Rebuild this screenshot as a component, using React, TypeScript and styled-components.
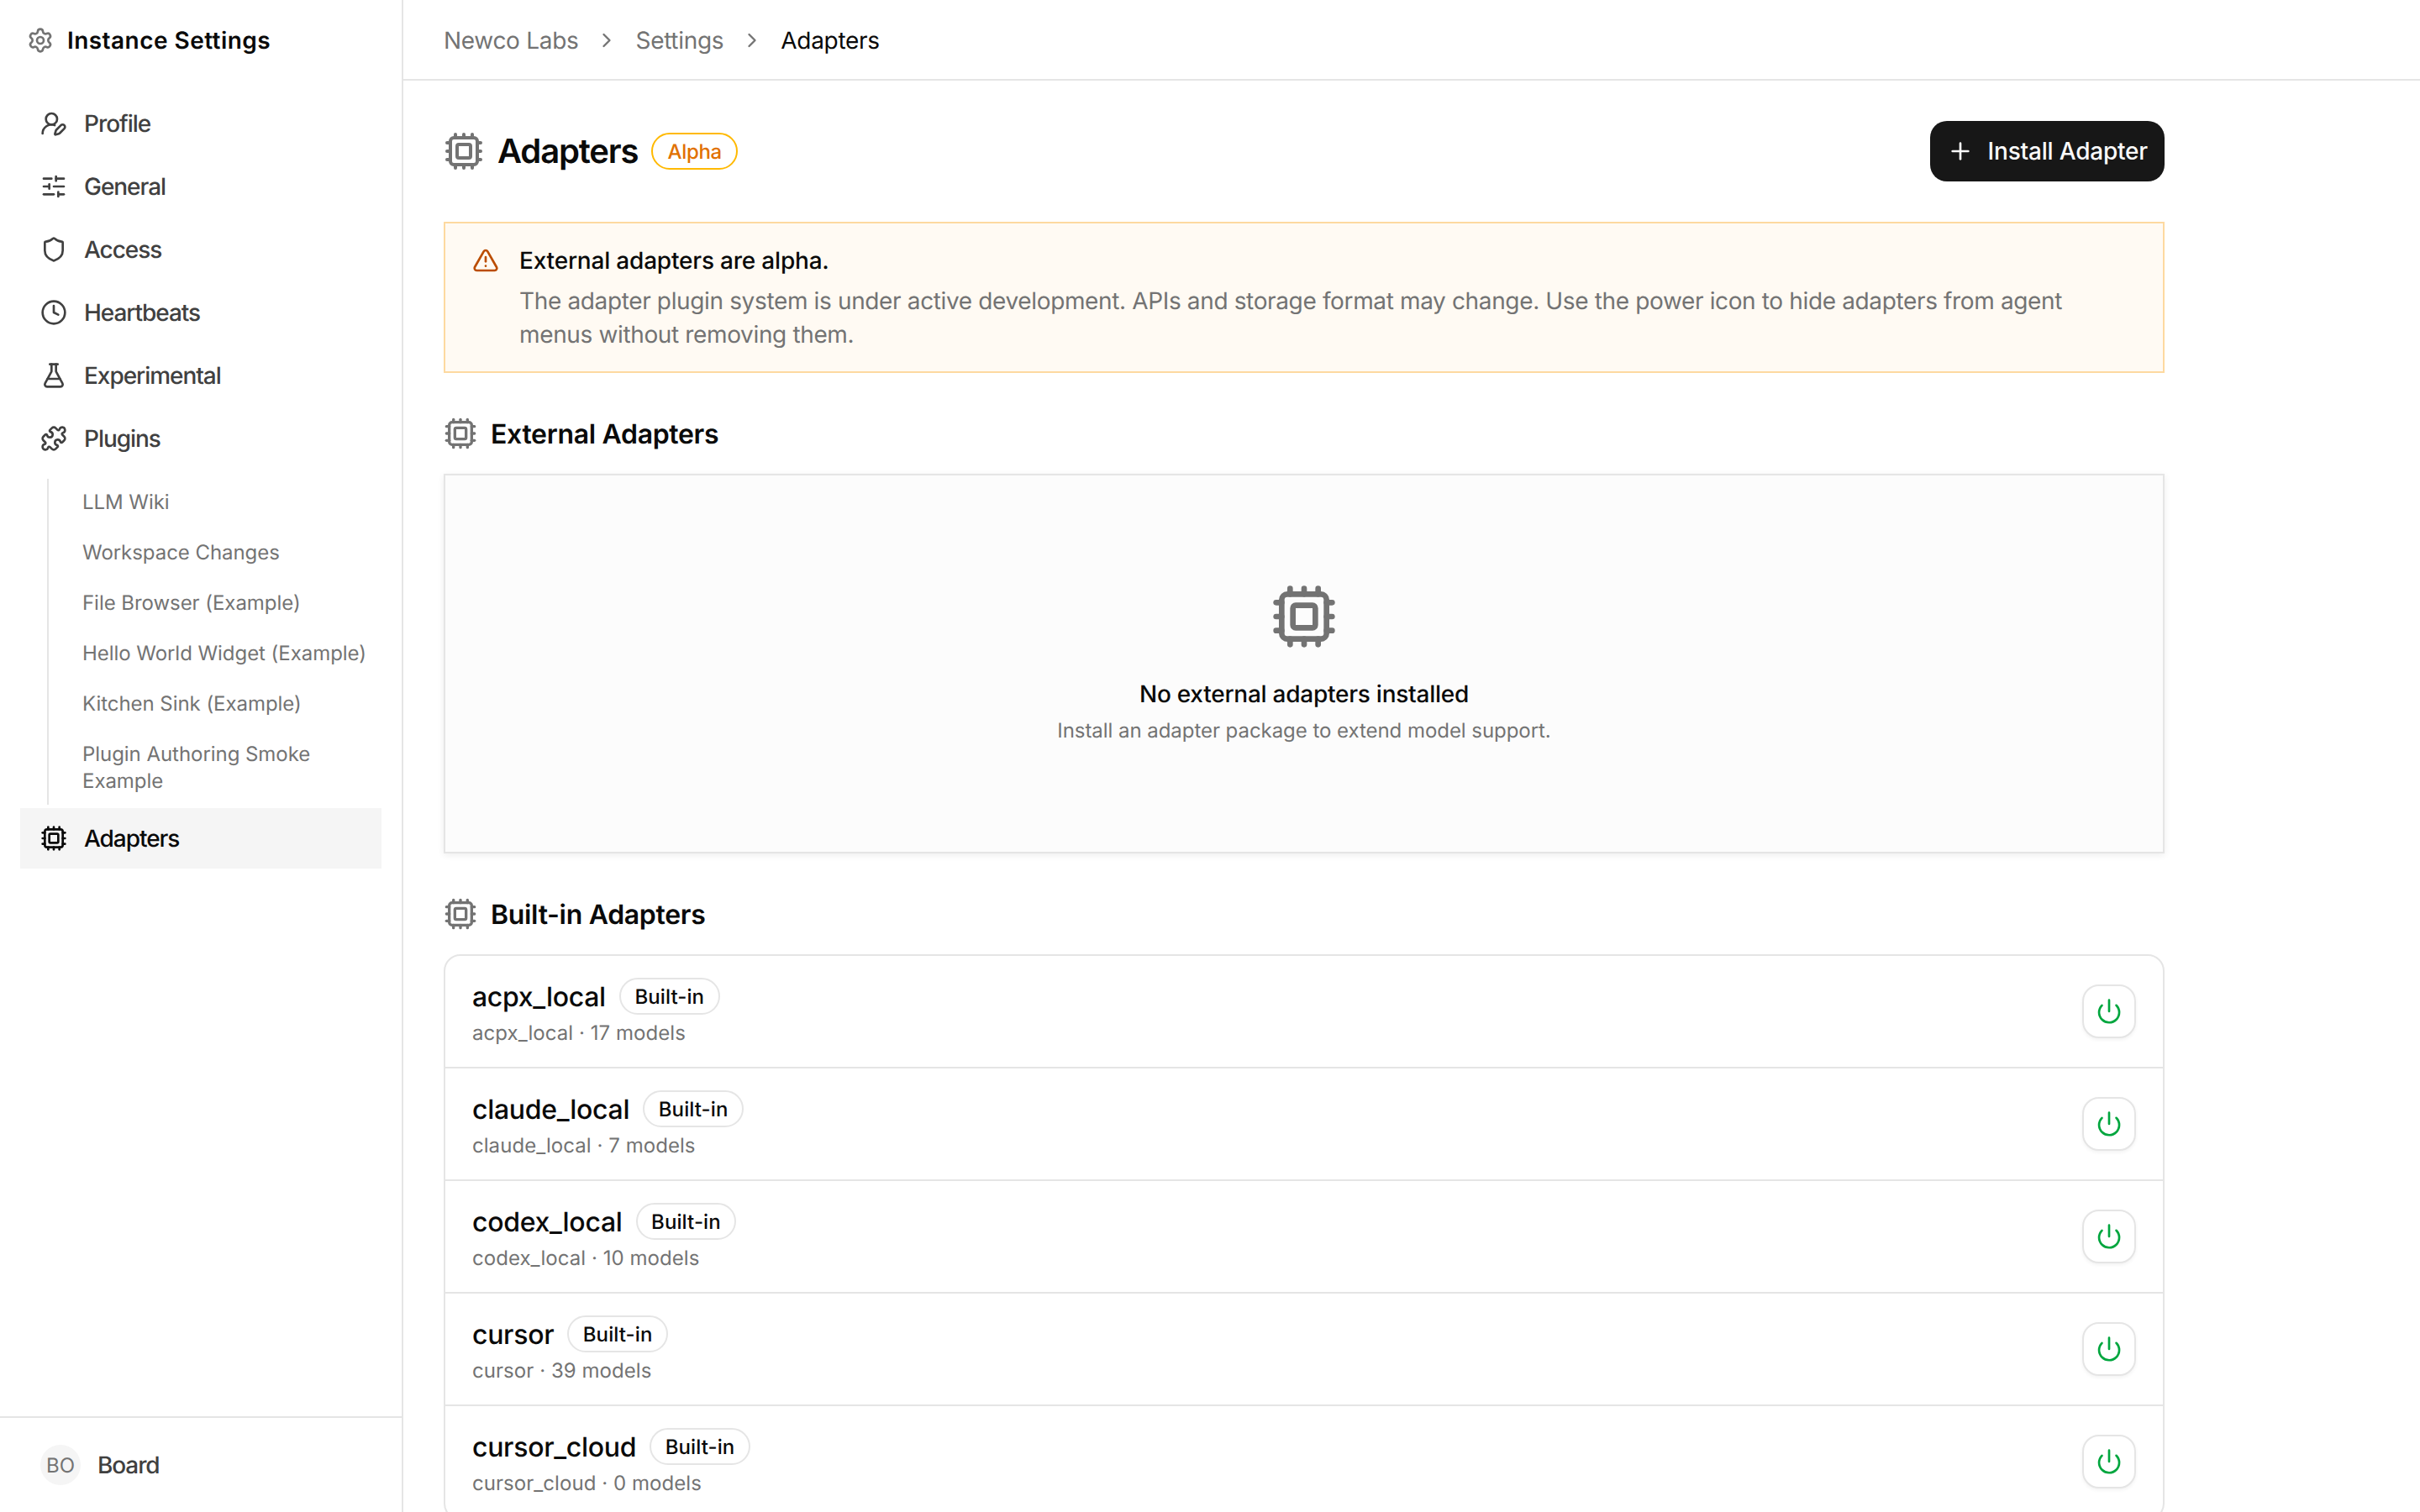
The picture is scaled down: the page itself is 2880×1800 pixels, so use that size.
import React from "react";
import styled, { createGlobalStyle } from "styled-components";
import {
  ChevronRight,
  Clock,
  Cpu,
  FlaskConical,
  Plus,
  Power,
  Puzzle,
  Settings,
  Shield,
  SlidersHorizontal,
  TriangleAlert,
  UserRoundPen,
} from "lucide-react";

const GlobalStyle = createGlobalStyle`
  * { box-sizing: border-box; }
  html, body { margin: 0; padding: 0; height: 100%; background: #ffffff; overflow: hidden; }
  body {
    font-family: "Inter", "Liberation Sans", sans-serif;
    color: #0a0a0a;
    text-rendering: geometricPrecision;
  }
  #root { height: 100%; }
`;

const Shell = styled.div`
  display: flex;
  height: 1800px;
  overflow: hidden;
`;

const Sidebar = styled.aside`
  width: 480px;
  flex: none;
  display: flex;
  flex-direction: column;
  border-right: 2px solid #e5e5e5;
  background: #ffffff;
`;

const SidebarHeader = styled.div`
  height: 96px;
  flex: none;
  display: flex;
  align-items: center;
  gap: 16px;
  padding: 0 32px;
  color: #737373;
`;

const SidebarTitle = styled.span`
  font-size: 28px;
  line-height: 40px;
  font-weight: 600;
  letter-spacing: 0.45px;
  color: #0a0a0a;
`;

const Nav = styled.nav`
  flex: 1;
  display: flex;
  flex-direction: column;
  gap: 3px;
  padding: 15px 24px 0;
`;

const NavItem = styled.a<{ $active?: boolean }>`
  display: flex;
  align-items: center;
  gap: 20px;
  height: 72px;
  padding: 0 24px;
  font-size: 28px;
  line-height: 40px;
  font-weight: 450;
  letter-spacing: -1.05px;
  color: ${(p) => (p.$active ? "#0a0a0a" : "#404040")};
  background: ${(p) => (p.$active ? "#f5f5f5" : "transparent")};
`;

const SubList = styled.div`
  display: flex;
  flex-direction: column;
  gap: 4px;
  margin: 9px 0 1px 32px;
  border-left: 2px solid #e5e5e5;
`;

const SubItem = styled.a`
  display: block;
  padding: 12px 12px 12px 40px;
  font-size: 24px;
  line-height: 32px;
  letter-spacing: -0.05px;
  color: #737373;
`;

const SidebarFooter = styled.div`
  flex: none;
  display: flex;
  align-items: center;
  gap: 20px;
  height: 114px;
  padding: 0 48px;
  border-top: 2px solid #e5e5e5;
`;

const Avatar = styled.span`
  width: 48px;
  height: 48px;
  border-radius: 50%;
  display: flex;
  align-items: center;
  justify-content: center;
  background: #f5f5f5;
  color: #737373;
  font-size: 24px;
`;

const FooterName = styled.span`
  font-size: 28px;
  line-height: 40px;
  font-weight: 450;
  letter-spacing: -1.1px;
  color: #404040;
`;

const Main = styled.main`
  flex: 1;
  min-width: 0;
  display: flex;
  flex-direction: column;
  overflow: hidden;
`;

const TopBar = styled.header`
  height: 96px;
  flex: none;
  display: flex;
  align-items: center;
  gap: 20px;
  padding: 2px 48px 0;
  border-bottom: 2px solid #e5e5e5;
  color: #737373;
`;

const Crumb = styled.span<{ $current?: boolean }>`
  font-size: 28px;
  line-height: 40px;
  letter-spacing: -0.3px;
  color: ${(p) => (p.$current ? "#0a0a0a" : "#737373")};
`;

const Content = styled.div`
  flex: 1;
  width: 2144px;
  display: flex;
  flex-direction: column;
  gap: 48px;
  padding: 48px 48px 0;
  overflow: hidden;
`;

const TitleRow = styled.div`
  display: flex;
  align-items: center;
  justify-content: space-between;
  height: 72px;
`;

const TitleGroup = styled.div`
  display: flex;
  align-items: center;
  gap: 16px;
  color: #737373;
`;

const PageTitle = styled.h1`
  margin: 0;
  font-size: 40px;
  line-height: 56px;
  font-weight: 600;
  letter-spacing: -1.15px;
  color: #0a0a0a;
`;

const AlphaBadge = styled.span`
  height: 44px;
  display: inline-flex;
  align-items: center;
  padding: 0 17px;
  border: 2px solid #ffb900;
  border-radius: 22px;
  font-size: 24px;
  font-weight: 500;
  letter-spacing: -0.3px;
  color: #e17100;
`;

const PrimaryButton = styled.button`
  height: 72px;
  display: inline-flex;
  align-items: center;
  gap: 17px;
  padding: 0 20px;
  border: 0;
  border-radius: 20px;
  background: #171717;
  color: #fafafa;
  font-family: inherit;
  font-size: 28px;
  font-weight: 500;
  letter-spacing: -0.2px;
`;

const Alert = styled.div`
  display: flex;
  gap: 24px;
  padding: 24px 32px;
  border: 2px solid #fdd9a0;
  background: #fffaf3;
`;

const AlertIcon = styled.span`
  flex: none;
  height: 40px;
  display: flex;
  align-items: center;
  color: #bb4d00;
`;

const AlertBody = styled.div`
  display: flex;
  flex-direction: column;
  gap: 8px;
`;

const AlertTitle = styled.div`
  font-size: 28px;
  line-height: 40px;
  font-weight: 500;
  letter-spacing: -0.2px;
  color: #0a0a0a;
`;

const AlertText = styled.div`
  font-size: 28px;
  line-height: 40px;
  letter-spacing: -0.36px;
  color: #737373;
`;

const Section = styled.section`
  display: flex;
  flex-direction: column;
  gap: 24px;
`;

const SectionHead = styled.div`
  display: flex;
  align-items: center;
  gap: 16px;
  height: 48px;
  color: #737373;
`;

const SectionTitle = styled.h2`
  margin: 2px 0 0;
  font-size: 32px;
  line-height: 48px;
  font-weight: 600;
  letter-spacing: -0.32px;
  color: #0a0a0a;
`;

const EmptyCard = styled.div`
  display: flex;
  flex-direction: column;
  align-items: center;
  padding: 128px 0;
  border: 2px solid #e5e5e5;
  background: #fcfcfc;
  box-shadow: 0 2px 8px rgba(0, 0, 0, 0.07);
  color: #737373;
`;

const EmptyTitle = styled.div`
  margin-top: 32px;
  font-size: 28px;
  line-height: 40px;
  font-weight: 500;
  letter-spacing: -0.25px;
  color: #0a0a0a;
`;

const EmptyText = styled.div`
  margin-top: 8px;
  font-size: 24px;
  line-height: 32px;
  letter-spacing: -0.05px;
  color: #737373;
`;

const List = styled.div`
  border: 2px solid #e5e5e5;
  border-radius: 20px;
  display: flex;
  flex-direction: column;
`;

const Row = styled.div`
  flex: none;
  height: 134px;
  display: flex;
  align-items: center;
  justify-content: space-between;
  padding: 0 32px;
  border-bottom: 2px solid #e5e5e5;
`;

const RowMain = styled.div`
  display: flex;
  flex-direction: column;
  gap: 4px;
`;

const RowHead = styled.div`
  display: flex;
  align-items: center;
  gap: 16px;
  height: 48px;
`;

const RowName = styled.span`
  font-size: 32px;
  line-height: 48px;
  font-weight: 450;
  letter-spacing: -0.3px;
  margin-top: 2px;
  color: #0a0a0a;
`;

const BuiltInBadge = styled.span`
  height: 44px;
  display: inline-flex;
  align-items: center;
  padding: 0 16.5px;
  border: 2px solid #e5e5e5;
  border-radius: 22px;
  font-size: 24px;
  font-weight: 450;
  letter-spacing: 0.1px;
  color: #0a0a0a;
`;

const RowMeta = styled.div`
  font-size: 24px;
  line-height: 32px;
  letter-spacing: 0.05px;
  color: #737373;
`;

const PowerButton = styled.button`
  width: 64px;
  height: 64px;
  flex: none;
  display: flex;
  align-items: center;
  justify-content: center;
  padding: 0;
  border: 2px solid #e5e5e5;
  border-radius: 20px;
  background: #ffffff;
  box-shadow: 0 2px 4px rgba(0, 0, 0, 0.05);
  color: #00a63e;
`;

const plugins = [
  "LLM Wiki",
  "Workspace Changes",
  "File Browser (Example)",
  "Hello World Widget (Example)",
  "Kitchen Sink (Example)",
  "Plugin Authoring Smoke Example",
];

const navItems = [
  { label: "Profile", Icon: UserRoundPen },
  { label: "General", Icon: SlidersHorizontal },
  { label: "Access", Icon: Shield },
  { label: "Heartbeats", Icon: Clock },
  { label: "Experimental", Icon: FlaskConical },
  { label: "Plugins", Icon: Puzzle },
];

const adapters = [
  { name: "acpx_local", models: 17 },
  { name: "claude_local", models: 7 },
  { name: "codex_local", models: 10 },
  { name: "cursor", models: 39 },
  { name: "cursor_cloud", models: 0 },
];

export default function App() {
  return (
    <>
      <GlobalStyle />
      <Shell>
        <Sidebar>
          <SidebarHeader>
            <Settings size={32} />
            <SidebarTitle>Instance Settings</SidebarTitle>
          </SidebarHeader>
          <Nav>
            {navItems.map(({ label, Icon }) => (
              <NavItem key={label}>
                <Icon size={32} />
                {label}
              </NavItem>
            ))}
            <SubList>
              {plugins.map((p) => (
                <SubItem key={p}>{p}</SubItem>
              ))}
            </SubList>
            <NavItem $active>
              <Cpu size={32} />
              Adapters
            </NavItem>
          </Nav>
          <SidebarFooter>
            <Avatar>BO</Avatar>
            <FooterName>Board</FooterName>
          </SidebarFooter>
        </Sidebar>
        <Main>
          <TopBar>
            <Crumb>Newco Labs</Crumb>
            <ChevronRight size={28} />
            <Crumb>Settings</Crumb>
            <ChevronRight size={28} />
            <Crumb $current>Adapters</Crumb>
          </TopBar>
          <Content>
            <TitleRow>
              <TitleGroup>
                <Cpu size={48} />
                <PageTitle>Adapters</PageTitle>
                <AlphaBadge>Alpha</AlphaBadge>
              </TitleGroup>
              <PrimaryButton>
                <Plus size={32} />
                Install Adapter
              </PrimaryButton>
            </TitleRow>
            <Alert>
              <AlertIcon>
                <TriangleAlert size={32} />
              </AlertIcon>
              <AlertBody>
                <AlertTitle>External adapters are alpha.</AlertTitle>
                <AlertText>
                  The adapter plugin system is under active development. APIs and storage format may
                  change. Use the power icon to hide adapters from agent menus without removing them.
                </AlertText>
              </AlertBody>
            </Alert>
            <Section>
              <SectionHead>
                <Cpu size={40} />
                <SectionTitle>External Adapters</SectionTitle>
              </SectionHead>
              <EmptyCard>
                <Cpu size={80} />
                <EmptyTitle>No external adapters installed</EmptyTitle>
                <EmptyText>Install an adapter package to extend model support.</EmptyText>
              </EmptyCard>
            </Section>
            <Section>
              <SectionHead>
                <Cpu size={40} />
                <SectionTitle>Built-in Adapters</SectionTitle>
              </SectionHead>
              <List>
                {adapters.map((a) => (
                  <Row key={a.name}>
                    <RowMain>
                      <RowHead>
                        <RowName>{a.name}</RowName>
                        <BuiltInBadge>Built-in</BuiltInBadge>
                      </RowHead>
                      <RowMeta>
                        {a.name} · {a.models} models
                      </RowMeta>
                    </RowMain>
                    <PowerButton>
                      <Power size={32} />
                    </PowerButton>
                  </Row>
                ))}
              </List>
            </Section>
          </Content>
        </Main>
      </Shell>
    </>
  );
}
